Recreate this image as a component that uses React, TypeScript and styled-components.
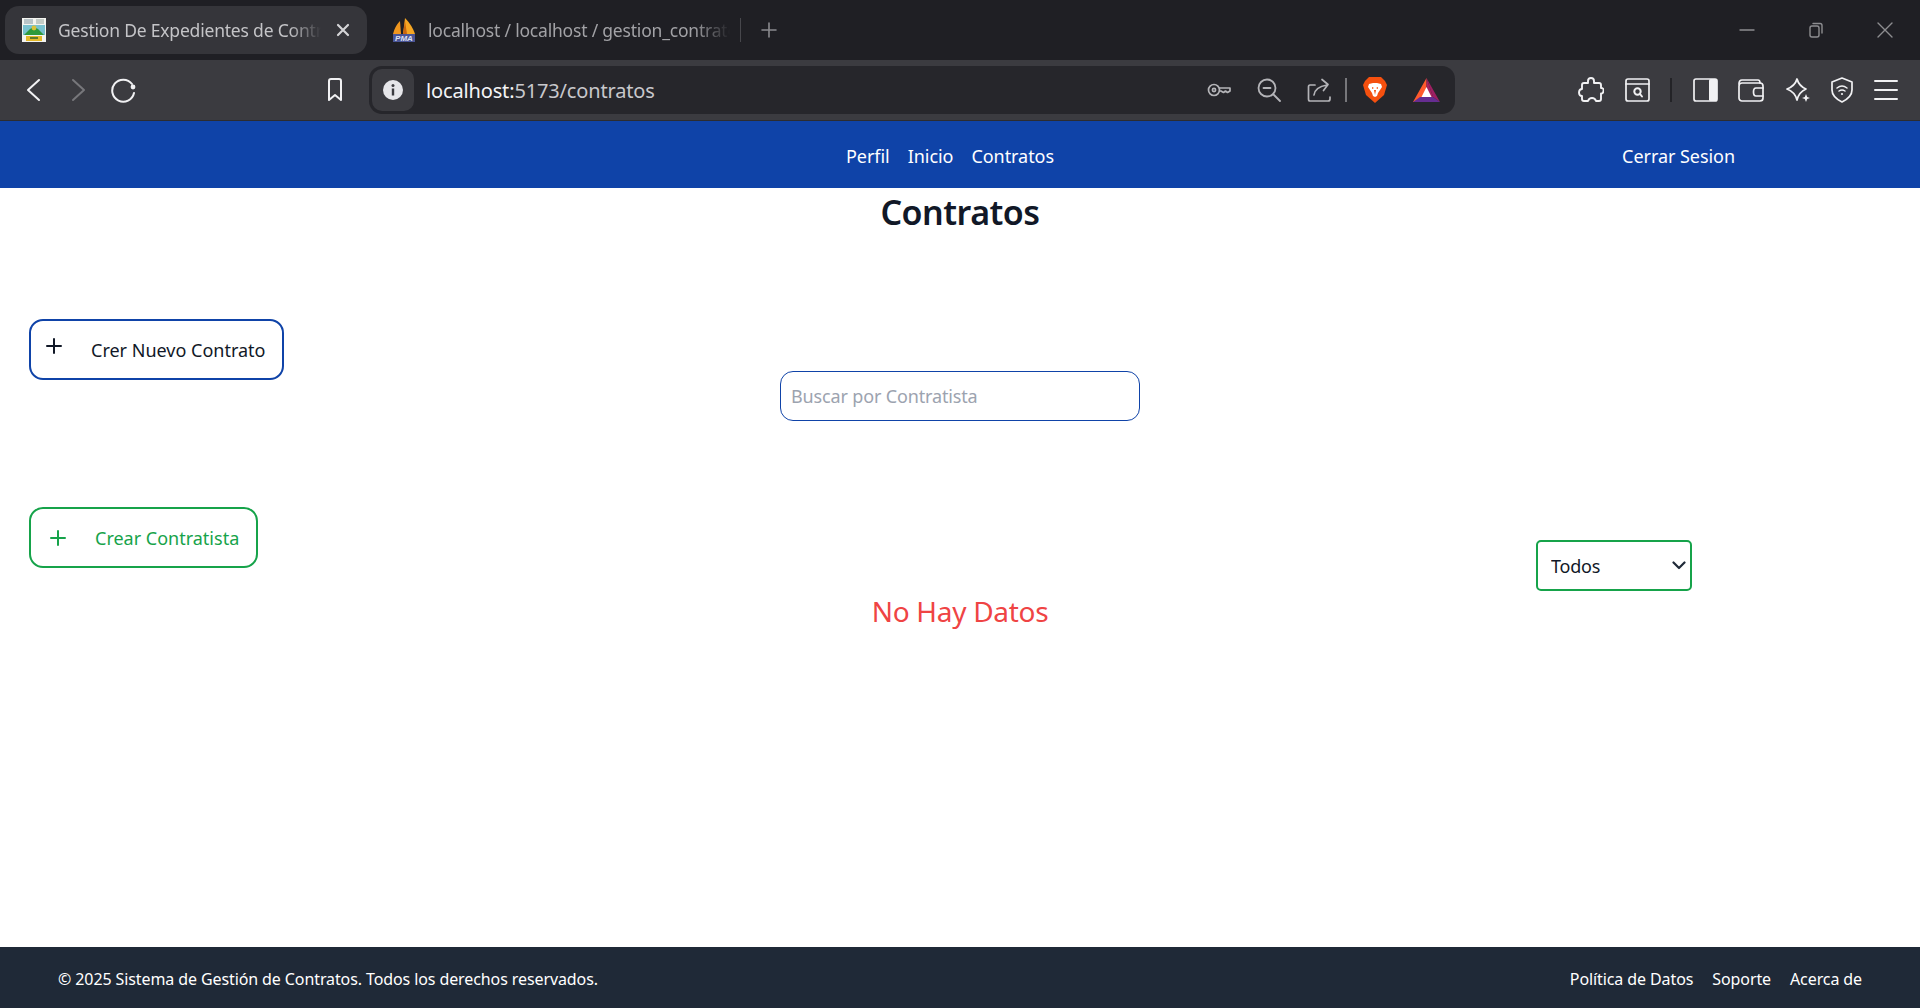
import React from "react";
import styled, { createGlobalStyle } from "styled-components";

const GlobalStyle = createGlobalStyle`
  html, body { margin: 0; padding: 0; background: #fff; }
  body { font-family: "Noto Sans", "Open Sans", sans-serif; color: #111827; }
  * { box-sizing: border-box; }
`;

const Page = styled.div`
  display: flex;
  flex-direction: column;
  height: 100vh;
  overflow: hidden;
`;

/* browser chrome */
const TabStrip = styled.div`
  display: flex;
  align-items: center;
  height: 60px;
  padding-left: 5px;
  background: #1f1f24;
  flex: none;
`;
const ActiveTab = styled.div`
  display: flex;
  align-items: center;
  width: 362px;
  height: 48px;
  padding: 0 12px 0 17px;
  background: #35353a;
  border-radius: 14px;
`;
const InactiveTab = styled.div`
  display: flex;
  align-items: center;
  width: 373px;
  height: 48px;
  padding-left: 25px;
`;
const TabTitle = styled.span<{ $dim?: boolean }>`
  flex: 1;
  margin: 0 10px 0 12px;
  overflow: hidden;
  white-space: nowrap;
  font-size: 17.5px;
  letter-spacing: -0.2px;
  color: ${(p) => (p.$dim ? "#a2a2a6" : "#c4c4c7")};
  mask-image: linear-gradient(to right, #000 88%, transparent 100%);
`;
const TabDivider = styled.div`
  width: 1px;
  height: 24px;
  background: #47474c;
`;
const NewTab = styled.div`
  display: flex;
  margin-left: 19px;
  color: #8a8a8e;
`;
const WindowControls = styled.div`
  display: flex;
  align-items: center;
  gap: 53px;
  margin-left: auto;
  padding-right: 27px;
  color: #8d8d90;
`;
const Toolbar = styled.div`
  display: flex;
  align-items: center;
  height: 61px;
  padding-left: 23px;
  background: #3b3b40;
  border-bottom: 1px solid #2c2c30;
  flex: none;
  color: #f1f1f3;
`;
const NavIcons = styled.div`
  display: flex;
  align-items: center;
  gap: 22px;
`;
const BookmarkSlot = styled.div`
  display: flex;
  margin: 0 25px 0 189px;
`;
const UrlBar = styled.div`
  display: flex;
  align-items: center;
  width: 1086px;
  height: 48px;
  padding: 0 15px 0 3px;
  background: #26262b;
  border-radius: 13px;
`;
const SiteInfo = styled.div`
  display: flex;
  align-items: center;
  justify-content: center;
  width: 42px;
  height: 42px;
  background: #3b3b40;
  border-radius: 10px;
`;
const UrlText = styled.div`
  flex: 1;
  margin-left: 12px;
  font-size: 20px;
  letter-spacing: -0.15px;
  color: #c8c8cc;
  b { font-weight: 400; color: #f4f4f6; }
`;
const UrlActions = styled.div`
  display: flex;
  align-items: center;
  gap: 26px;
  color: #b4b4b8;
`;
const ShieldGroup = styled.div`
  display: flex;
  align-items: center;
  gap: 26px;
  margin-left: 16px;
`;
const ActionDivider = styled.div<{ $dark?: boolean }>`
  width: 2px;
  height: 24px;
  margin-left: ${(p) => (p.$dark ? 0 : 14)}px;
  background: ${(p) => (p.$dark ? "#232327" : "#77777b")};
`;
const ToolIcons = styled.div`
  display: flex;
  align-items: center;
  gap: 20.5px;
  margin-left: 123px;
`;

/* app nav */
const NavBar = styled.nav`
  display: flex;
  align-items: center;
  height: 67px;
  padding: 2px 185px 0 846px;
  background: #0f43a8;
  flex: none;
`;
const NavLink = styled.a`
  color: #fff;
  font-size: 18px;
  letter-spacing: -0.05px;
  margin-right: 18px;
`;
const Logout = styled(NavLink)`
  margin: 0 0 0 auto;
`;

/* page body */
const Main = styled.main`
  flex: 1;
  display: flex;
  flex-direction: column;
  min-height: 0;
`;
const Title = styled.h1`
  margin: 0;
  height: 48px;
  text-align: center;
  font-size: 34px;
  line-height: 48px;
  font-weight: 600;
  letter-spacing: -0.5px;
  color: #111827;
`;
const Controls = styled.div`
  display: grid;
  grid-template-columns: 1fr 360px 1fr;
  padding-top: 83px;
`;
const ButtonColumn = styled.div`
  display: flex;
  flex-direction: column;
  align-items: flex-start;
  gap: 127px;
  padding-left: 29px;
`;
const ActionButton = styled.button<{ $color: string; $text: string; $inset: number }>`
  display: flex;
  align-items: center;
  gap: 29px;
  height: 61px;
  padding: 0 17px 0 ${(p) => p.$inset}px;
  background: #fff;
  border: 2px solid ${(p) => p.$color};
  border-radius: 14px;
  color: ${(p) => p.$text};
  font-family: inherit;
  font-size: 18px;
  cursor: pointer;
`;
const PlusIcon = styled.span<{ $lift?: boolean }>`
  display: flex;
  position: relative;
  top: ${(p) => (p.$lift ? -4 : 0)}px;
`;
const SearchInput = styled.input`
  align-self: start;
  width: 360px;
  height: 50px;
  margin-top: 52px;
  padding: 0 10px;
  background: #fff;
  border: 1px solid #0f43a8;
  border-radius: 13px;
  outline: none;
  font-family: inherit;
  font-size: 18px;
  letter-spacing: -0.15px;
  &::placeholder { color: #9ca3af; opacity: 1; }
`;
const FilterWrap = styled.div`
  position: relative;
  justify-self: end;
  align-self: end;
  width: 156px;
  height: 51px;
  margin: 0 228px -23px 0;
`;
const FilterSelect = styled.select`
  appearance: none;
  width: 100%;
  height: 100%;
  padding: 0 13px;
  background: #fff;
  border: 2px solid #16a34a;
  border-radius: 5px;
  outline: none;
  color: #111827;
  font-family: inherit;
  font-size: 18px;
  letter-spacing: -0.2px;
`;
const FilterChevron = styled.span`
  position: absolute;
  top: 21px;
  right: 6px;
  display: flex;
  color: #1f2937;
  pointer-events: none;
`;
const Empty = styled.p`
  margin: 21px 0 0;
  text-align: center;
  font-size: 28px;
  line-height: 44px;
  letter-spacing: -0.3px;
  color: #ef4444;
`;

/* footer */
const Footer = styled.footer`
  display: flex;
  align-items: center;
  justify-content: space-between;
  height: 61px;
  padding: 2px 58px 0;
  background: #1f2937;
  color: #fff;
  font-size: 16px;
  letter-spacing: -0.1px;
  flex: none;
`;
const FooterLinks = styled.div`
  display: flex;
  gap: 19px;
`;

const Glyph = ({ w = 24, h = 24, sw = 2, children }: { w?: number; h?: number; sw?: number; children: React.ReactNode }) => (
  <svg width={w} height={h} viewBox={`0 0 ${w} ${h}`} fill="none" stroke="currentColor" strokeWidth={sw} strokeLinecap="round" strokeLinejoin="round">
    {children}
  </svg>
);

const ShieldFavicon = () => (
  <svg width="24" height="24" viewBox="0 0 24 24">
    <rect width="24" height="24" fill="#f4f4f0" />
    <rect x="2" y="1" width="9" height="5" fill="#b9c4c8" />
    <rect x="14" y="1" width="8" height="5" fill="#c3cbc5" />
    <rect x="1" y="7" width="22" height="10" fill="#79c1cf" />
    <path d="M2 17 L8 11 Q12 8 16 11 L22 17 Z" fill="#2f9a3c" />
    <circle cx="12" cy="10" r="2.4" fill="#d8c23a" />
    <rect x="4" y="18" width="16" height="5" fill="#e5b92a" />
    <rect x="8" y="19" width="8" height="2" fill="#5f7a2c" />
  </svg>
);

const PmaFavicon = () => (
  <svg width="24" height="26" viewBox="0 0 24 26">
    <path d="M1 17 Q3 9 8 4 L9 17 Z" fill="#f0961e" />
    <path d="M11 17 L13 1 Q20 8 23 17 Z" fill="#f5a623" />
    <path d="M13 4 L15 17 L11 17 Z" fill="#c8660f" />
    <rect x="1" y="17" width="22" height="8" fill="#4a5596" />
    <text x="12" y="24" textAnchor="middle" fontSize="8" fontWeight="700" fontStyle="italic" fill="#dfe2f2" fontFamily="Liberation Sans, sans-serif">PMA</text>
  </svg>
);

const BraveLion = () => (
  <svg width="24" height="28" viewBox="0 0 24 28">
    <path d="M6 1 H18 L22 5 L24 9 L21 19 L12 27 L3 19 L0 9 L2 5 Z" fill="#f5500f" />
    <path d="M6 8 L10 7 H14 L18 8 L19 11 L15 17 L14 20 L12 21 L10 20 L9 17 L5 11 Z" fill="#fff" />
    <path d="M9 11 L11 12 L9 13 Z M15 11 L13 12 L15 13 Z" fill="#f5500f" />
    <path d="M11 14 H13 L12 19 Z" fill="#f5500f" />
  </svg>
);

const BatLogo = () => (
  <svg width="27" height="24" viewBox="0 0 27 24">
    <path d="M13.5 0 L0 24 H13.5 Z" fill="#ff5a2c" />
    <path d="M13.5 0 L27 24 L20 19 Z" fill="#9e1f63" />
    <path d="M13.5 0 L20 19 H13.5 Z" fill="#a8235f" />
    <path d="M7 19 H20 L27 24 H0 Z" fill="#662d91" />
    <path d="M13.5 9 L18.5 19 H8.5 Z" fill="#fff" />
  </svg>
);

export default function App() {
  return (
    <Page>
      <GlobalStyle />
      <TabStrip>
        <ActiveTab>
          <ShieldFavicon />
          <TabTitle>Gestion De Expedientes de Contratos</TabTitle>
          <Glyph w={24} h={24} sw={2.2}>
            <path d="M7 7 L17 17 M17 7 L7 17" stroke="#d4d4d6" />
          </Glyph>
        </ActiveTab>
        <InactiveTab>
          <PmaFavicon />
          <TabTitle $dim>localhost / localhost / gestion_contratos</TabTitle>
        </InactiveTab>
        <TabDivider />
        <NewTab>
          <Glyph w={18} h={18} sw={1.6}>
            <path d="M9 2 V16 M2 9 H16" />
          </Glyph>
        </NewTab>
        <WindowControls>
          <Glyph w={16} h={16} sw={1.4}>
            <path d="M1 8 H15" />
          </Glyph>
          <Glyph w={16} h={16} sw={1.4}>
            <rect x="2" y="4" width="9" height="11" rx="2" />
            <path d="M5 1.5 H12 Q14 1.5 14 3.5 V11" />
          </Glyph>
          <Glyph w={16} h={16} sw={1.4}>
            <path d="M1 1 L15 15 M15 1 L1 15" />
          </Glyph>
        </WindowControls>
      </TabStrip>

      <Toolbar>
        <NavIcons>
          <Glyph w={22} h={24} sw={2}>
            <path d="M16 2 L5 12 L16 22" />
          </Glyph>
          <Glyph w={22} h={24} sw={2}>
            <path d="M6 2 L17 12 L6 22" stroke="#77777b" />
          </Glyph>
          <Glyph w={26} h={26} sw={2}>
            <path d="M21 7 A11 11 0 1 0 23 16" />
            <circle cx="22" cy="10" r="2.4" fill="currentColor" stroke="none" />
          </Glyph>
        </NavIcons>
        <BookmarkSlot>
          <Glyph w={18} h={24} sw={2}>
            <path d="M3 3 Q3 1 5 1 H13 Q15 1 15 3 V22 L9 17 L3 22 Z" />
          </Glyph>
        </BookmarkSlot>
        <UrlBar>
          <SiteInfo>
            <svg width="20" height="20" viewBox="0 0 20 20">
              <circle cx="10" cy="10" r="10" fill="#e6e6ea" />
              <rect x="8.8" y="8.5" width="2.4" height="7" fill="#3b3b40" />
              <circle cx="10" cy="5.6" r="1.5" fill="#3b3b40" />
            </svg>
          </SiteInfo>
          <UrlText>
            <b>localhost:</b>5173/contratos
          </UrlText>
          <UrlActions>
            <Glyph w={24} h={24} sw={1.7}>
              <circle cx="7" cy="12" r="5.5" />
              <circle cx="7" cy="12" r="1.6" />
              <path d="M12.5 10 H23 V13 L20.5 14.5 L18.5 13 L16.5 14.5 L14 13 H12.5" />
            </Glyph>
            <Glyph w={24} h={24} sw={1.8}>
              <circle cx="10" cy="10" r="8.5" />
              <path d="M6.5 10 H13.5 M16.5 16.5 L23 23" />
            </Glyph>
            <Glyph w={24} h={24} sw={1.7}>
              <path d="M8 7 H3 Q1.5 7 1.5 9 V21 Q1.5 23 3 23 H21 Q23 23 23 21 V19" />
              <path d="M7 17 Q8 9 20 7 M15 1.5 L21 6.5 L16.5 12.5" />
            </Glyph>
          </UrlActions>
          <ActionDivider />
          <ShieldGroup>
            <BraveLion />
            <BatLogo />
          </ShieldGroup>
        </UrlBar>
        <ToolIcons>
          <Glyph w={26} h={26} sw={1.9}>
            <path d="M10 4 Q10 1 13 1 Q16 1 16 4 V6 H21 Q23 6 23 8 V11 Q26 11 25.5 14 Q25 17 23 16.5 V22 Q23 24 21 24 H18 Q17 21 14 21 Q11 21 10 24 H6 Q4 24 4 22 V19 Q1 19 1 15.5 Q1 12 4 12 V8 Q4 6 6 6 H10 Z" />
          </Glyph>
          <Glyph w={25} h={24} sw={1.7}>
            <rect x="1" y="1" width="23" height="22" rx="2" />
            <path d="M1 6 H24" />
            <circle cx="12.5" cy="13.5" r="3.2" strokeWidth="2" />
            <path d="M15 16 L17 18.5" strokeWidth="2" />
          </Glyph>
          <ActionDivider $dark />
          <Glyph w={25} h={24} sw={1.7}>
            <rect x="1" y="1" width="23" height="22" rx="2" />
            <rect x="16" y="1" width="8" height="22" rx="1.5" fill="currentColor" stroke="none" />
          </Glyph>
          <Glyph w={26} h={24} sw={1.7}>
            <path d="M1 6 Q1 2 4 2 H20 Q22 2 22 5" />
            <rect x="1" y="5" width="24" height="18" rx="3" />
            <path d="M25 10 H18 Q15.5 10 15.5 14 Q15.5 18 18 18 H25" />
          </Glyph>
          <Glyph w={26} h={26} sw={1.8}>
            <path d="M12 2 Q14 9 21 12 Q14 15 12 23 Q10 15 2 12 Q10 9 12 2 Z" />
            <path d="M21 17 L22.2 20 L25 21 L22.2 22 L21 25 L19.8 22 L17 21 L19.8 20 Z" fill="currentColor" stroke="none" />
          </Glyph>
          <Glyph w={22} h={26} sw={1.7}>
            <path d="M11 1 L21 5 V13 Q21 20 11 25 Q1 20 1 13 V5 Z" />
            <path d="M6 11 Q11 7 16 11 M8 14 Q11 12 14 14" strokeWidth="1.5" />
            <circle cx="11" cy="17" r="1.1" fill="currentColor" stroke="none" />
          </Glyph>
          <Glyph w={24} h={22} sw={2}>
            <path d="M1 2 H23 M1 11 H23 M1 20 H23" />
          </Glyph>
        </ToolIcons>
      </Toolbar>

      <NavBar>
        <NavLink>Perfil</NavLink>
        <NavLink>Inicio</NavLink>
        <NavLink>Contratos</NavLink>
        <Logout>Cerrar Sesion</Logout>
      </NavBar>

      <Main>
        <Title>Contratos</Title>
        <Controls>
          <ButtonColumn>
            <ActionButton $color="#0f43a8" $text="#111827" $inset={15}>
              <PlusIcon $lift>
                <Glyph w={16} h={16} sw={2}>
                  <path d="M8 1 V15 M1 8 H15" />
                </Glyph>
              </PlusIcon>
              Crer Nuevo Contrato
            </ActionButton>
            <ActionButton $color="#16a34a" $text="#16a34a" $inset={19}>
              <PlusIcon>
                <Glyph w={16} h={16} sw={2}>
                  <path d="M8 1 V15 M1 8 H15" />
                </Glyph>
              </PlusIcon>
              Crear Contratista
            </ActionButton>
          </ButtonColumn>
          <SearchInput placeholder="Buscar por Contratista" />
          <FilterWrap>
            <FilterSelect defaultValue="Todos">
              <option>Todos</option>
            </FilterSelect>
            <FilterChevron>
              <Glyph w={14} h={9} sw={2.2}>
                <path d="M1.5 1.5 L7 7 L12.5 1.5" />
              </Glyph>
            </FilterChevron>
          </FilterWrap>
        </Controls>
        <Empty>No Hay Datos</Empty>
      </Main>

      <Footer>
        <span>© 2025 Sistema de Gestión de Contratos. Todos los derechos reservados.</span>
        <FooterLinks>
          <span>Política de Datos</span>
          <span>Soporte</span>
          <span>Acerca de</span>
        </FooterLinks>
      </Footer>
    </Page>
  );
}
